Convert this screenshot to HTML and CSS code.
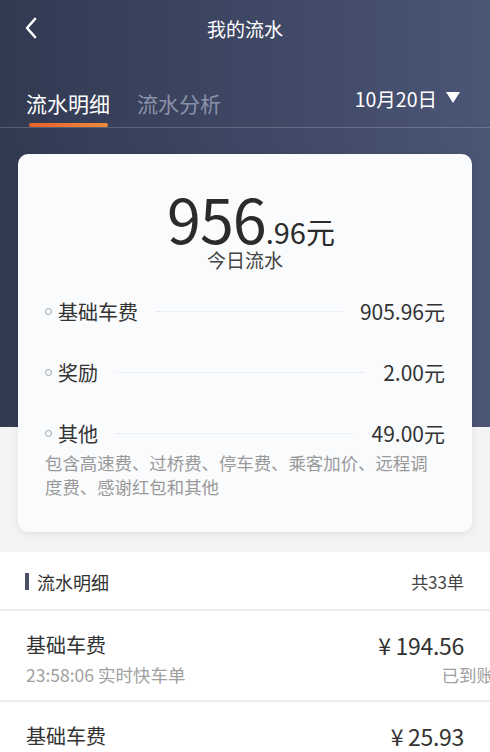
FILE: index.html
```html
<!DOCTYPE html>
<html lang="zh-CN">
<head>
<meta charset="utf-8">
<title>我的流水</title>
<link rel="stylesheet" href="styles.css">
</head>
<body>
<div class="page">
  <header class="nav">
    <svg class="back" width="14" height="22" viewBox="0 0 14 22"><path d="M11 2 L3 11 L11 20" fill="none" stroke="#fff" stroke-width="2.6" stroke-linecap="round" stroke-linejoin="round"/></svg>
    <div class="title">我的流水</div>
  </header>
  <div class="tabs">
    <div class="tab active">流水明细<span class="underline"></span></div>
    <div class="tab">流水分析</div>
    <div class="date">10月20日<span class="tri"></span></div>
  </div>
  <section class="card">
    <div class="total"><span class="big">956</span><span class="small">.96元</span></div>
    <div class="total-label">今日流水</div>
    <div class="row"><span class="dot"></span><span class="label">基础车费</span><span class="dots"></span><span class="value">905.96元</span></div>
    <div class="row"><span class="dot"></span><span class="label">奖励</span><span class="dots"></span><span class="value">2.00元</span></div>
    <div class="row"><span class="dot"></span><span class="label">其他</span><span class="dots"></span><span class="value">49.00元</span></div>
    <p class="desc">包含高速费、过桥费、停车费、乘客加价、远程调度费、感谢红包和其他</p>
  </section>
  <section class="list">
    <div class="list-head"><span class="bar"></span><span class="head-title">流水明细</span><span class="count">共33单</span></div>
    <div class="item">
      <div class="item-left"><div class="item-name">基础车费</div><div class="item-sub">23:58:06 实时快车单</div></div>
      <div class="item-right"><div class="amount">¥ 194.56</div><div class="status">已到账</div></div>
    </div>
    <div class="item">
      <div class="item-left"><div class="item-name">基础车费</div><div class="item-sub">23:41:12 实时快车单</div></div>
      <div class="item-right"><div class="amount">¥ 25.93</div><div class="status">已到账</div></div>
    </div>
  </section>
</div>
</body>
</html>
```
FILE: styles.css
```css
* { box-sizing: border-box; margin: 0; padding: 0; }
html, body { width: 490px; height: 752px; overflow: hidden; }
body {
  font-family: "Noto Sans CJK SC", "Noto Sans", sans-serif;
  background: #f4f4f5;
}
.page {
  width: 490px;
  min-height: 752px;
  background:
    linear-gradient(90deg, #323a52 0%, #3f4865 55%, #4b5576 100%) no-repeat top left / 100% 427px,
    #f4f4f5;
}
.nav {
  height: 56px;
  display: flex;
  align-items: center;
  justify-content: center;
  position: relative;
}
.back { position: absolute; left: 24px; top: 17px; }
.title { color: #fff; font-size: 19px; }
.tabs {
  height: 72px;
  display: flex;
  align-items: center;
  padding: 22px 30px 0 26px;
  border-bottom: 1px solid rgba(255,255,255,0.18);
}
.tab {
  font-size: 21px;
  color: #8a92a8;
  margin-right: 27px;
  position: relative;
  line-height: 28px;
}
.tab.active { color: #fff; }
.underline {
  position: absolute;
  left: 3px; right: 2px;
  bottom: -10px;
  height: 4px;
  border-radius: 2px;
  background: linear-gradient(90deg, #e8622a, #f08a3c);
}
.date {
  margin-left: auto;
  color: #fff;
  font-size: 19.5px;
  display: flex;
  align-items: center;
  margin-top: -8px;
}
.tri {
  width: 0; height: 0;
  border-left: 7px solid transparent;
  border-right: 7px solid transparent;
  border-top: 11px solid #fff;
  margin-left: 9px;
  margin-top: -2px;
}
.card {
  margin: 26px 18px 0;
  background: #fafbfd;
  border-radius: 10px;
  box-shadow: 0 2px 8px rgba(0,0,0,0.08);
  padding: 33px 27px 32px 27px;
  height: 378px;
}
.total {
  display: flex;
  justify-content: center;
  align-items: baseline;
  color: #2b2b2b;
  line-height: 1;
  margin-left: 12px;
}
.big { font-size: 61px; letter-spacing: -1px; }
.small { font-size: 29px; }
.total-label {
  text-align: center;
  font-size: 19px;
  color: #444;
  line-height: 24px;
  margin-bottom: 24px;
}
.row {
  display: flex;
  align-items: center;
  height: 30px;
  margin-bottom: 31px;
}
.row:nth-of-type(5) { margin-bottom: 3px; }
.dot {
  width: 7px; height: 7px;
  border: 1.5px solid #9a9fa8;
  border-radius: 50%;
  margin-right: 6px;
}
.label { font-size: 20px; color: #333; }
.dots {
  flex: 1;
  border-bottom: 1px dotted #e0e3e8;
  margin: 0 18px;
  height: 0;
}
.value { font-size: 21px; color: #333; }
.desc {
  font-size: 17.4px;
  color: #999;
  line-height: 24px;
  padding-right: 12px;
}
.list { background: #fff; margin-top: 20px; }
.list-head {
  height: 59px;
  display: flex;
  align-items: center;
  padding: 2px 26px 0 25px;
  border-bottom: 2px solid #eeeeee;
}
.bar { width: 4px; height: 17px; background: #4a5068; margin-right: 8px; }
.head-title { font-size: 18px; color: #333; }
.count { margin-left: auto; font-size: 17px; color: #444; }
.item {
  display: flex;
  justify-content: space-between;
  padding: 19px 26px 0 26px;
  height: 91px;
  border-bottom: 2px solid #eeeeee;
}
.item-name { font-size: 20px; color: #333; line-height: 30px; }
.item-sub { font-size: 17.5px; color: #a0a0a0; line-height: 30px; }
.item-right { text-align: right; }
.amount { font-size: 23px; color: #333; line-height: 30px; letter-spacing: -0.3px; }
.status { font-size: 17.5px; color: #a0a0a0; line-height: 30px; margin-right: -30px; }
```
